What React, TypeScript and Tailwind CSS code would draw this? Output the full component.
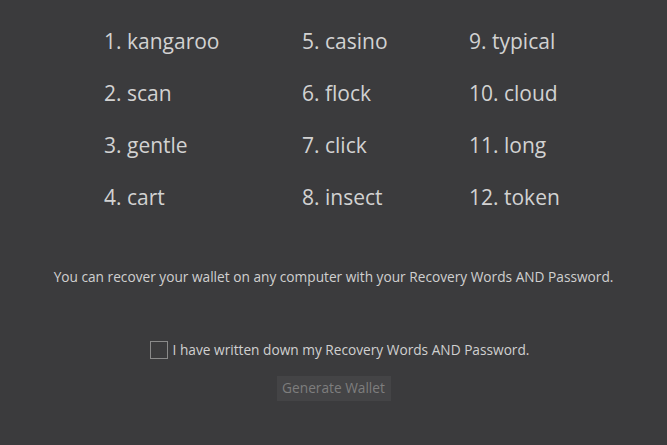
import React, { useState } from 'react';

const words = [
  'kangaroo', 'scan', 'gentle', 'cart',
  'casino', 'flock', 'click', 'insect',
  'typical', 'cloud', 'long', 'token',
];

export default function App() {
  const [checked, setChecked] = useState(false);

  return (
    <div
      className="w-[667px] h-[445px] bg-[#3b3b3d] text-[#d2d2d2] overflow-hidden"
      style={{ fontFamily: '"Open Sans", "Noto Sans", sans-serif' }}
    >
      {/* Recovery words */}
      <div className="grid grid-flow-col grid-rows-4 grid-cols-[198px_167px_120px] pl-[104px] pt-[26px]">
        {words.map((w, i) => (
          <div key={w} className="h-[52px] text-[21px] leading-[30px] font-medium">
            {i + 1}. {w}
          </div>
        ))}
      </div>

      <p className="mt-[34px] text-center text-[13.7px] leading-[18px] text-[#d0d0d0] font-medium">
        You can recover your wallet on any computer with your Recovery Words AND Password.
      </p>

      <label className="mt-[54px] pl-[12px] flex items-center justify-center gap-[5px] text-[13.7px] text-[#d0d0d0] font-medium">
        <input
          type="checkbox"
          checked={checked}
          onChange={(e) => setChecked(e.target.checked)}
          className="appearance-none w-[18px] h-[18px] border border-[#8a8a8a] bg-transparent"
        />
        I have written down my Recovery Words AND Password.
      </label>

      <div className="mt-[15px] flex justify-center">
        <button
          disabled={!checked}
          className="w-[114px] h-[25px] bg-[#444446] text-[13.7px] text-[#7e7e7e] font-medium"
        >
          Generate Wallet
        </button>
      </div>
    </div>
  );
}
